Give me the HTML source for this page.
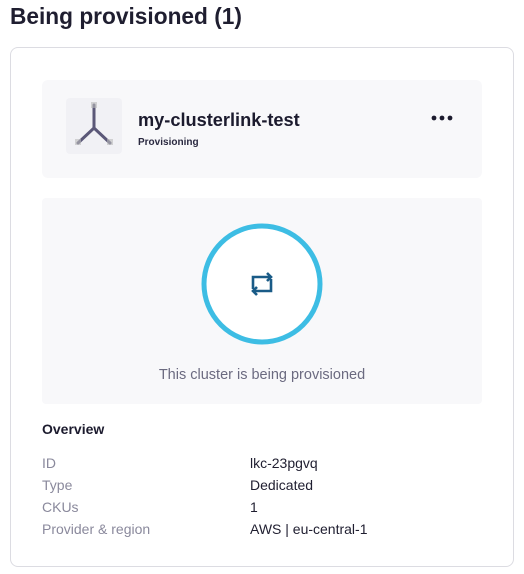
<!DOCTYPE html>
<html><head><style>
body{margin:0;width:524px;height:574px;background:#fff;font-family:"Liberation Sans",sans-serif;position:relative;overflow:hidden;color:#1c1b2e}
.a{position:absolute}
</style></head><body>
<div class="a" style="left:10px;top:3px;font-size:22.7px;font-weight:bold;color:#1f1e30">Being provisioned (1)</div>
<div class="a" style="left:10px;top:47px;width:502px;height:518px;border:1px solid #dcdce2;border-radius:8px"></div>
<div class="a" style="left:42px;top:80px;width:440px;height:98px;background:#f8f8fa;border-radius:6px"></div>
<div class="a" style="left:66px;top:98px;width:56px;height:56px;background:#f1f1f5;border-radius:4px"></div>
<svg class="a" style="left:66px;top:98px" width="56" height="56"><g stroke="#5b5878" stroke-width="3" stroke-linecap="round"><line x1="28" y1="7" x2="28" y2="30"/><line x1="28" y1="30" x2="12" y2="45"/><line x1="28" y1="30" x2="44" y2="45"/></g><rect x="25" y="4" width="6" height="6" fill="#bbb" opacity=".6"/><rect x="9" y="41" width="6" height="6" fill="#bbb" opacity=".6"/><rect x="41" y="41" width="6" height="6" fill="#bbb" opacity=".6"/></svg>
<div class="a" style="left:138px;top:110px;font-size:18.2px;font-weight:bold">my-clusterlink-test</div>
<div class="a" style="left:138px;top:137px;font-size:10px;font-weight:bold;color:#2a2940">Provisioning</div>
<svg class="a" style="left:430px;top:114px" width="24" height="8"><circle cx="4" cy="4" r="2.4" fill="#1c1b2e"/><circle cx="12" cy="4" r="2.4" fill="#1c1b2e"/><circle cx="20" cy="4" r="2.4" fill="#1c1b2e"/></svg>
<div class="a" style="left:42px;top:198px;width:440px;height:206px;background:#f8f8fa;border-radius:4px"></div>
<svg class="a" style="left:200px;top:222px" width="124" height="124"><circle cx="62" cy="62" r="58" fill="#fff" stroke="#3dbde4" stroke-width="5"/><g fill="none" stroke="#1a5b87" stroke-width="2.6"><path d="M53 67 V55 H71"/><path d="M67 51 L71 55 L67 59"/><path d="M71 57 V69 H53"/><path d="M57 65 L53 69 L57 73"/></g></svg>
<div class="a" style="left:42px;top:367px;width:440px;text-align:center;font-size:14.5px;color:#6b6a80">This cluster is being provisioned</div>
<div class="a" style="left:42px;top:421px;font-size:14px;font-weight:bold">Overview</div>
<div class="a" style="left:42px;top:452px;font-size:14px;color:#8a899c;line-height:22px">ID<br>Type<br>CKUs<br>Provider &amp; region</div>
<div class="a" style="left:250px;top:452px;font-size:14px;color:#1f1e30;line-height:22px">lkc-23pgvq<br>Dedicated<br>1<br>AWS | eu-central-1</div>
</body></html>
